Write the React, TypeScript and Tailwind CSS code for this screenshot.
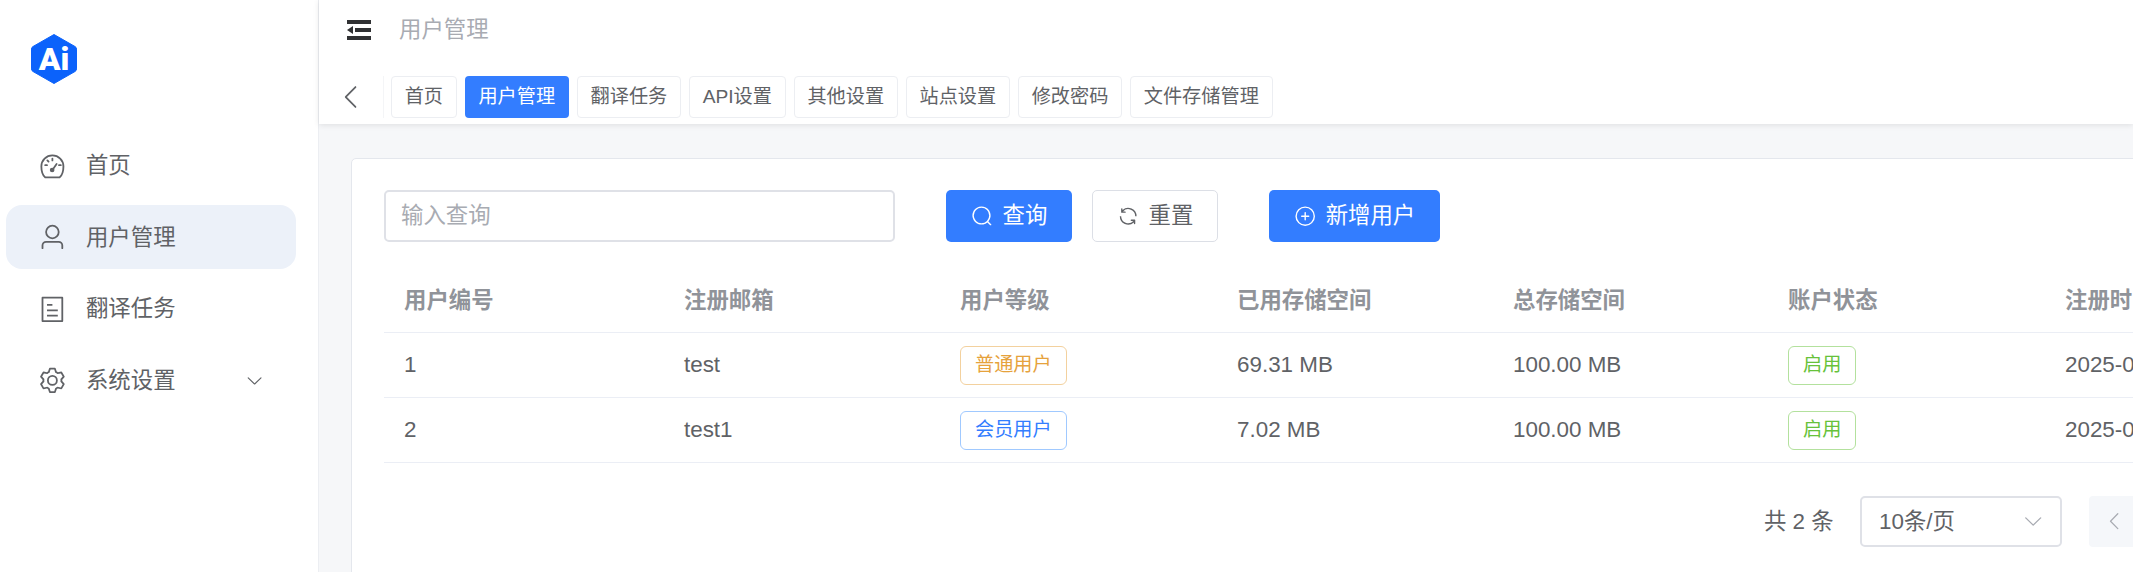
import React from "react";

const font = "font-['Liberation_Sans','Noto_Sans_CJK_SC',sans-serif]";

function ElIcon({ d, className }: { d: string | string[]; className?: string }) {
	const paths = Array.isArray(d) ? d : [d];
	return (
		<svg viewBox="0 0 1024 1024" fill="currentColor" className={className}>
			{paths.map((p) => (
				<path key={p} d={p} />
			))}
		</svg>
	);
}

const icons = {
	fold: "M896 192H128v128h768zm0 256H384v128h512zm0 256H128v128h768zM320 384 128 512l192 128z",
	user: "M512 512a192 192 0 1 0 0-384 192 192 0 0 0 0 384m0 64a256 256 0 1 1 0-512 256 256 0 0 1 0 512m320 320v-96a96 96 0 0 0-96-96H288a96 96 0 0 0-96 96v96a32 32 0 1 1-64 0v-96a160 160 0 0 1 160-160h448a160 160 0 0 1 160 160v96a32 32 0 1 1-64 0",
	tickets:
		"M192 128v768h640V128zm-32-64h704a32 32 0 0 1 32 32v832a32 32 0 0 1-32 32H160a32 32 0 0 1-32-32V96a32 32 0 0 1 32-32m160 448h384v64H320zm0-192h192v64H320zm0 384h384v64H320z",
	setting:
		"M600.704 64a32 32 0 0 1 30.464 22.208l35.2 109.376c14.784 7.232 28.928 15.36 42.432 24.512l112.384-24.192a32 32 0 0 1 34.432 15.36L944.32 364.8a32 32 0 0 1-4.032 37.504l-77.12 85.12a357.12 357.12 0 0 1 0 49.024l77.12 85.248a32 32 0 0 1 4.032 37.504l-88.704 153.6a32 32 0 0 1-34.432 15.296L708.8 803.904c-13.44 9.088-27.648 17.28-42.368 24.512l-35.264 109.376A32 32 0 0 1 600.704 960H423.296a32 32 0 0 1-30.464-22.208L357.696 828.48a351.616 351.616 0 0 1-42.56-24.64l-112.32 24.256a32 32 0 0 1-34.432-15.36L79.68 659.2a32 32 0 0 1 4.032-37.504l77.12-85.248a357.12 357.12 0 0 1 0-48.896l-77.12-85.248A32 32 0 0 1 79.68 364.8l88.704-153.6a32 32 0 0 1 34.432-15.296l112.32 24.256c13.568-9.152 27.776-17.408 42.56-24.64l35.2-109.312A32 32 0 0 1 423.232 64H600.64zm-23.424 64H446.72l-36.352 113.088-24.512 11.968a294.113 294.113 0 0 0-34.816 20.096l-22.656 15.36-116.224-25.088-65.28 113.152 79.68 88.192-1.92 27.136a293.12 293.12 0 0 0 0 40.192l1.92 27.136-79.808 88.192 65.344 113.152 116.224-25.024 22.656 15.296a294.113 294.113 0 0 0 34.816 20.096l24.512 11.968L446.72 896h130.688l36.48-113.152 24.448-11.904a288.282 288.282 0 0 0 34.752-20.096l22.592-15.296 116.288 25.024 65.28-113.152-79.744-88.192 1.92-27.136a293.12 293.12 0 0 0 0-40.256l-1.92-27.136 79.808-88.128-65.344-113.152-116.288 24.96-22.592-15.232a287.616 287.616 0 0 0-34.752-20.096l-24.448-11.904L577.344 128zM512 320a192 192 0 1 1 0 384 192 192 0 0 1 0-384m0 64a128 128 0 1 0 0 256 128 128 0 0 0 0-256",
	search:
		"m795.904 750.72 124.992 124.928a32 32 0 0 1-45.248 45.248L750.656 795.904a416 416 0 1 1 45.248-45.248zM480 832a352 352 0 1 0 0-704 352 352 0 0 0 0 704",
	refresh:
		"M771.776 794.88A384 384 0 0 1 128 512h64a320 320 0 0 0 555.712 216.448H654.72a32 32 0 1 1 0-64h149.056a32 32 0 0 1 32 32v148.928a32 32 0 1 1-64 0v-50.56zM276.288 295.616h92.992a32 32 0 0 1 0 64H220.16a32 32 0 0 1-32-32V178.56a32 32 0 0 1 64 0v50.56A384 384 0 0 1 896.128 512h-64a320 320 0 0 0-555.776-216.384z",
	plus: [
		"M352 480h320a32 32 0 1 1 0 64H352a32 32 0 0 1 0-64",
		"M480 672V352a32 32 0 1 1 64 0v320a32 32 0 0 1-64 0",
		"M512 896a384 384 0 1 0 0-768 384 384 0 0 0 0 768m0 64a448 448 0 1 1 0-896 448 448 0 0 1 0 896",
	],
	down: "M831.872 340.864 512 652.672 192.128 340.864a30.592 30.592 0 0 0-42.752 0 29.12 29.12 0 0 0 0 41.6L489.664 714.24a32 32 0 0 0 44.672 0l340.288-331.712a29.12 29.12 0 0 0 0-41.728 30.592 30.592 0 0 0-42.752 0z",
	left: "M609.408 149.376 277.76 489.6a32 32 0 0 0 0 44.672l331.648 340.352a29.12 29.12 0 0 0 41.728 0 30.592 30.592 0 0 0 0-42.752L339.264 511.936l311.872-319.872a30.592 30.592 0 0 0 0-42.688 29.12 29.12 0 0 0-41.728 0z",
};

function Gauge({ className }: { className?: string }) {
	return (
		<svg viewBox="0 0 24 24" fill="none" stroke="currentColor" strokeWidth="1.5" className={className}>
			<path d="M6 21.200h12c2-1.900 3.200-4.400 3.200-9.200a9.200 9.200 0 0 0-18.400 0c0 4.800 1.200 7.300 3.200 9.200z" />
			<path d="M12 15l3.500-5M12 5.500v1.500M6 11h1.500M17.500 11H19M7.800 7l1 1" strokeLinecap="round" />
			<circle cx="11.800" cy="15" r="1.200" fill="currentColor" />
		</svg>
	);
}

function Logo() {
	return (
		<div className="relative w-[46px] h-[52px]">
			<svg viewBox="0 0 46 52" className="w-full h-full">
				<path
					d="M23 1.500 44 13.500a3 3 0 0 1 1.500 2.600v19.800a3 3 0 0 1-1.500 2.600L23 50.500 2 38.500a3 3 0 0 1-1.500-2.600V16.100A3 3 0 0 1 2 13.500z"
					fill="#0b62fb"
					stroke="#0b62fb"
					strokeLinejoin="round"
				/>
			</svg>
			<span className="absolute inset-0 flex items-center justify-center font-['Roboto',sans-serif] font-black text-[32px] leading-none text-white">
				Ai
			</span>
		</div>
	);
}

const tabs = ["首页", "用户管理", "翻译任务", "API设置", "其他设置", "站点设置", "修改密码", "文件存储管理"];

const columns = "grid grid-cols-[280px_276px_277px_276px_275px_277px_1fr]";

const rows = [
	{ id: "1", email: "test", level: "普通用户", levelCls: "text-[#e6a23c] border-[#f3d19e]", used: "69.31 MB" },
	{ id: "2", email: "test1", level: "会员用户", levelCls: "text-[#337dff] border-[#a0c9ff]", used: "7.02 MB" },
];

function Cell({ children }: { children: React.ReactNode }) {
	return <div className="flex items-center pl-5 whitespace-nowrap">{children}</div>;
}

function Tag({ children, className }: { children: React.ReactNode; className: string }) {
	return (
		<span className={`flex items-center justify-center h-[39px] px-[14px] rounded-[6px] border text-[19.2px] ${className}`}>
			{children}
		</span>
	);
}

export default function App() {
	return (
		<div className={`flex w-[2133px] h-[572px] overflow-hidden bg-white ${font}`}>
			{/* Sidebar */}
			<aside className="w-[319px] shrink-0 border-r border-[#eceef2] text-[22.4px] text-[#606266]">
				<div className="pl-[31px] pt-[33px] h-[133px]">
					<Logo />
				</div>
				<nav className="flex flex-col gap-[7.5px]">
					<a className="flex items-center h-[64px] ml-[6px] mr-[22px] pl-[32px] gap-[19.2px] pt-[2px]">
						<Gauge className="w-[28.8px] h-[28.8px]" />
						<span>首页</span>
					</a>
					<a className="flex items-center h-[64px] ml-[6px] mr-[22px] pl-[32px] gap-[19.2px] pt-[2px] rounded-[16px] bg-[#ecf1f9]">
						<ElIcon d={icons.user} className="w-[28.8px] h-[28.8px]" />
						<span>用户管理</span>
					</a>
					<a className="flex items-center h-[64px] ml-[6px] mr-[22px] pl-[32px] gap-[19.2px] pt-[2px]">
						<ElIcon d={icons.tickets} className="w-[28.8px] h-[28.8px]" />
						<span>翻译任务</span>
					</a>
					<a className="flex items-center h-[64px] ml-[6px] mr-[22px] pl-[32px] gap-[19.2px] pt-[2px]">
						<ElIcon d={icons.setting} className="w-[28.8px] h-[28.8px]" />
						<span>系统设置</span>
						<ElIcon d={icons.down} className="w-[19.2px] h-[19.2px] ml-[50px]" />
					</a>
				</nav>
			</aside>

			<div className="flex-1 min-w-0 flex flex-col bg-[#f6f7f9]">
				{/* Header */}
				<header className="h-[124px] shrink-0 bg-white shadow-[0_1px_6px_rgba(0,0,0,0.1)] z-10">
					<div className="flex items-center h-[60px] pl-[24px] gap-[24px]">
						<ElIcon d={icons.fold} className="w-[32px] h-[32px] text-[#303133]" />
						<span className="text-[22.4px] text-[#a8abb2]">用户管理</span>
					</div>
					<div className="flex items-center h-[42px] mt-[16px]">
						<div className="w-[65px] h-[42px] shrink-0 flex items-center pl-[18px] border-r border-[#f4f5f7]">
							<ElIcon d={icons.left} className="w-[30px] h-[30px] text-[#606266]" />
						</div>
						<div className="flex gap-[8px] ml-[7px]">
							{tabs.map((t) =>
								t === "用户管理" ? (
									<span key={t} className="flex items-center h-[42px] px-[13.7px] rounded-[4px] bg-[#337dff] text-white text-[19.2px]">
										{t}
									</span>
								) : (
									<span key={t} className="flex items-center h-[42px] px-[12.7px] rounded-[4px] border border-[#eceef2] text-[#606266] text-[19.2px]">
										{t}
									</span>
								)
							)}
						</div>
					</div>
				</header>

				{/* Content */}
				<main className="flex-1 min-h-0 pl-[32px] pt-[34px]">
					<div className="w-[1900px] h-[500px] bg-white border border-[#e4e7ed] rounded-[5px] pl-[32px] pt-[31px] text-[22.4px] text-[#606266]">
						<div className="flex items-center">
							<div className="flex items-center w-[511px] h-[52px] px-[15px] border-2 border-[#dfe1e7] rounded-[5px] text-[#a8abb2]">
								输入查询
							</div>
							<button className="flex items-center justify-center gap-[9.6px] w-[126px] h-[52px] ml-[51px] rounded-[5px] bg-[#337dff] text-white">
								<ElIcon d={icons.search} className="w-[22.4px] h-[22.4px]" />
								查询
							</button>
							<button className="flex items-center justify-center gap-[9.6px] w-[126px] h-[52px] ml-[20px] rounded-[5px] border border-[#dcdfe6]">
								<ElIcon d={icons.refresh} className="w-[22.4px] h-[22.4px]" />
								重置
							</button>
							<button className="flex items-center justify-center gap-[9.6px] w-[171px] h-[52px] ml-[51px] rounded-[5px] bg-[#337dff] text-white">
								<ElIcon d={icons.plus} className="w-[22.4px] h-[22.4px]" />
								新增用户
							</button>
						</div>

						<div className="mt-[23px] w-[1860px]">
							<div className={`${columns} h-[68px] pt-[4px] border-b border-[#ebeef5] font-bold text-[#909399]`}>
								{["用户编号", "注册邮箱", "用户等级", "已用存储空间", "总存储空间", "账户状态", "注册时间"].map((h) => (
									<Cell key={h}>{h}</Cell>
								))}
							</div>
							{rows.map((r) => (
								<div key={r.id} className={`${columns} h-[65px] border-b border-[#ebeef5]`}>
									<Cell>{r.id}</Cell>
									<Cell>{r.email}</Cell>
									<Cell>
										<Tag className={r.levelCls}>{r.level}</Tag>
									</Cell>
									<Cell>{r.used}</Cell>
									<Cell>100.00 MB</Cell>
									<Cell>
										<Tag className="text-[#67c23a] border-[#b3e19d]">启用</Tag>
									</Cell>
									<Cell>2025-01-01</Cell>
								</div>
							))}
						</div>

						<div className="flex items-center mt-[33px] h-[51px] pl-[1380px]">
							<span className="w-[69px] whitespace-nowrap">共 2 条</span>
							<div className="flex items-center justify-between w-[202px] h-[51px] ml-[27px] pl-[17px] pr-[16px] border-2 border-[#dfe1e7] rounded-[5px]">
								<span>10条/页</span>
								<ElIcon d={icons.down} className="w-[22.4px] h-[22.4px] text-[#a8abb2]" />
							</div>
							<div className="flex items-center w-[64px] h-[51px] ml-[27px] pl-[15px] rounded-[4px] bg-[#f5f7fa] text-[#a8abb2]">
								<ElIcon d={icons.left} className="w-[22.4px] h-[22.4px]" />
							</div>
						</div>
					</div>
				</main>
			</div>
		</div>
	);
}
